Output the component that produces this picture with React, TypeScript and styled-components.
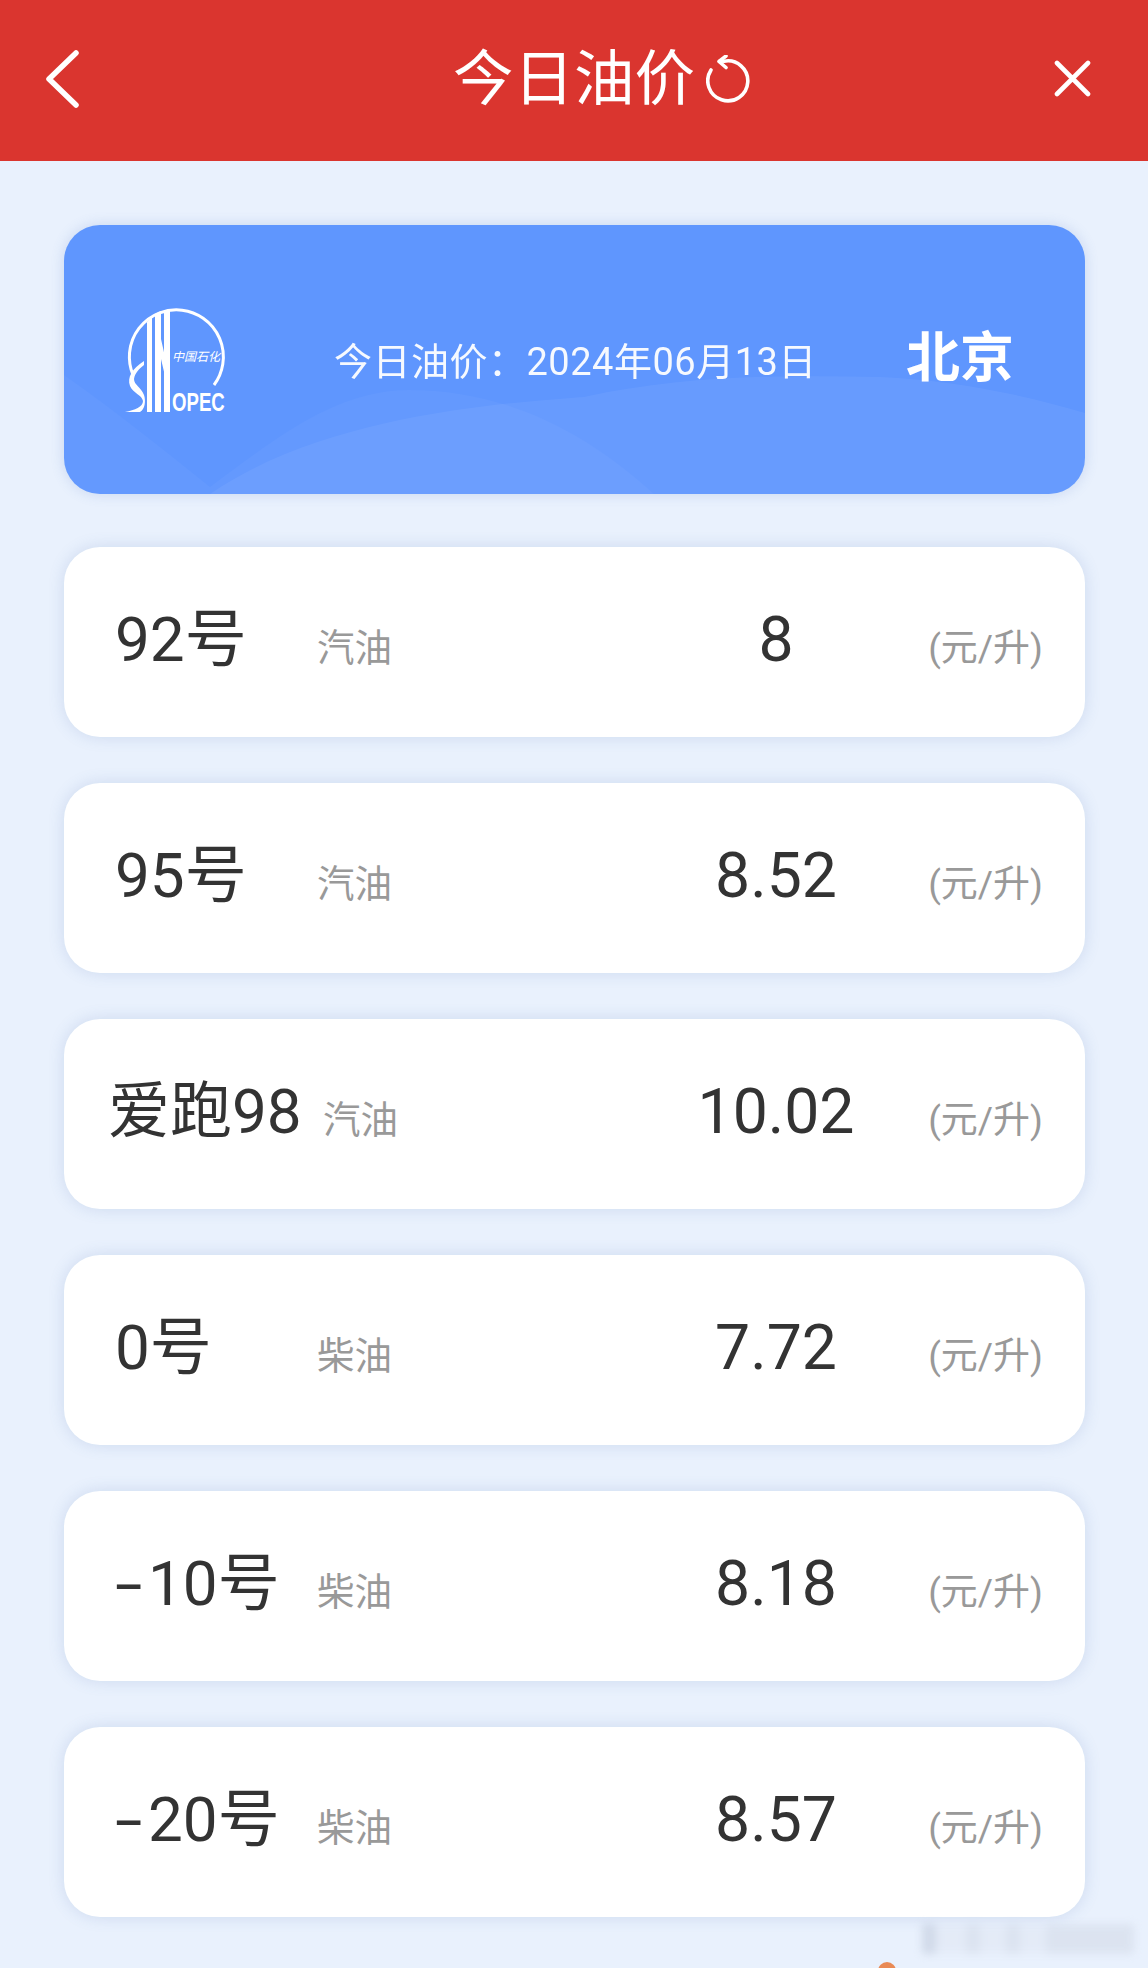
import React from "react";
import styled, { createGlobalStyle } from "styled-components";

const prices = [
  { name: "92号", type: "汽油", price: "8" },
  { name: "95号", type: "汽油", price: "8.52" },
  { name: "爱跑98", type: "汽油", price: "10.02", wide: true },
  { name: "0号", type: "柴油", price: "7.72" },
  { name: "10号", negative: true, type: "柴油", price: "8.18" },
  { name: "20号", negative: true, type: "柴油", price: "8.57" },
];

const App = () => {
  return (
    <Page>
      <GlobalStyle />
      <Header>
        <HeaderSide>
          <svg width="36" height="58" viewBox="0 0 36 58" fill="none">
            <path d="M32 3 L5 29 L32 55" stroke="#fff" strokeWidth="5.5" strokeLinecap="round" strokeLinejoin="round" />
          </svg>
        </HeaderSide>
        <Title>今日油价</Title>
        <HeaderRight>
          <svg width="44" height="48" viewBox="0 0 44 48" fill="none">
            <path d="M5 15 A20 20 0 1 0 18 6.2 L14 6" stroke="#fff" strokeWidth="3.6" strokeLinecap="round" />
            <path d="M20 1 L13 6.5 L20 12.5" stroke="#fff" strokeWidth="3.6" strokeLinecap="round" strokeLinejoin="round" />
          </svg>
          <svg width="37" height="37" viewBox="0 0 37 37" fill="none">
            <path d="M3 3 L34 34 M34 3 L3 34" stroke="#fff" strokeWidth="4.6" strokeLinecap="round" />
          </svg>
        </HeaderRight>
      </Header>

      <Content>
        <Banner>
          <Waves viewBox="0 0 1021 269" preserveAspectRatio="none">
            <path d="M0 150 C50 185 100 225 146 262 C210 215 270 165 345 165 C440 165 520 205 590 269 L0 269 Z" fill="#fff" fillOpacity="0.03" />
            <path d="M146 269 C260 190 440 178 520 172 C620 150 720 150 816 152 C890 155 960 170 1021 188 L1021 269 Z" fill="#fff" fillOpacity="0.055" />
          </Waves>
          <Logo viewBox="0 0 100 104" fill="none">
            <path d="M89 76 A47 47 0 1 0 8 66" stroke="#fff" strokeWidth="3" />
            <path d="M22 13 L27 8 V103 H22 Z M30 5 L36 2 V103 H30 Z M39 1 H45 V103 H39 Z M36 30 L45 70 V88 L36 50 Z" fill="#fff" />
            <path d="M19 52 C7 60 2 68 5 77 C8 84 17 86 18 92 C18 98 10 101 0 103 H15 C20 100 21 92 19 86 C16 78 9 76 9 70 C10 64 14 60 19 56 Z" fill="#fff" />
            <LogoCn x="47" y="52">中国石化</LogoCn>
            <LogoLatin transform="translate(47 102) scale(0.98 1.4)">OPEC</LogoLatin>
          </Logo>
          <DateText>今日油价：2024年06月13日</DateText>
          <City>北京</City>
        </Banner>

        {prices.map((item) => (
          <PriceCard key={item.name}>
            <FuelName $wide={item.wide}>
              {item.negative && <Minus>-</Minus>}
              {item.name}
            </FuelName>
            <FuelType $wide={item.wide}>{item.type}</FuelType>
            <Price>{item.price}</Price>
            <Unit>(元/升)</Unit>
          </PriceCard>
        ))}
      </Content>

      <Watermark />
      <OrangeDot />
    </Page>
  );
};

const GlobalStyle = createGlobalStyle`
  html, body {
    margin: 0;
    padding: 0;
    background: #e9f1fd;
  }
`;

const Page = styled.div`
  position: relative;
  width: 1148px;
  height: 1968px;
  overflow: hidden;
  background: #e9f1fd;
  font-family: Roboto, "Noto Sans CJK SC", sans-serif;
`;

const Header = styled.header`
  display: grid;
  grid-template-columns: 1fr auto 1fr;
  align-items: center;
  height: 161px;
  box-sizing: border-box;
  padding: 0 44px 4px;
  background: #da352f;
  color: #fff;
`;

const HeaderSide = styled.div`
  display: flex;
  align-items: center;
`;

const HeaderRight = styled.div`
  display: flex;
  align-items: center;
  justify-content: space-between;
  padding: 0 13px 0 11px;
`;

const Title = styled.h1`
  margin: 0;
  padding-top: 4px;
  font-size: 60.5px;
  font-weight: 400;
  line-height: 1;
`;

const Content = styled.main`
  display: flex;
  flex-direction: column;
  gap: 46px;
  padding: 64px 63px 0 64px;
`;

const Banner = styled.section`
  position: relative;
  display: flex;
  align-items: center;
  height: 269px;
  margin-bottom: 7px;
  padding: 0 71px 0 61px;
  box-sizing: border-box;
  border-radius: 36px;
  overflow: hidden;
  background: #5f96fe;
  color: #fff;
  box-shadow: 0 0 14px rgba(70, 110, 190, 0.2);
`;

const Waves = styled.svg`
  position: absolute;
  inset: 0;
  width: 100%;
  height: 100%;
`;

const Logo = styled.svg`
  position: relative;
  width: 100px;
  height: 104px;
  margin-top: 3px;
  flex: none;
  overflow: visible;
`;

const LogoCn = styled.text`
  fill: #fff;
  font-size: 12px;
  font-style: italic;
`;

const LogoLatin = styled.text`
  fill: #fff;
  font-family: "Liberation Sans", sans-serif;
  font-size: 19px;
  font-weight: 700;
`;

const DateText = styled.div`
  position: relative;
  margin-left: 109px;
  margin-top: 4px;
  font-size: 38px;
  line-height: 1;
  letter-spacing: 0.5px;
  white-space: nowrap;
  opacity: 0.95;
`;

const City = styled.div`
  position: relative;
  margin-left: auto;
  margin-top: -2px;
  font-size: 54px;
  font-weight: 700;
  line-height: 1;
`;

const PriceCard = styled.article`
  display: grid;
  grid-template-columns: 202px 1fr 200px 166px;
  align-items: baseline;
  align-content: center;
  height: 190px;
  box-sizing: border-box;
  padding: 0 42px 4px 51px;
  border-radius: 36px;
  background: #fff;
  box-shadow: 0 0 16px rgba(80, 110, 170, 0.18);
`;

const FuelName = styled.div<{ $wide?: boolean }>`
  font-size: 62px;
  color: #333;
  line-height: 1.2;
  white-space: nowrap;
  margin-left: ${(p) => (p.$wide ? "-7px" : "0")};
`;

const Minus = styled.span`
  display: inline-block;
  width: 33px;
  transform: scaleX(1.6);
  transform-origin: left center;
`;

const FuelType = styled.div<{ $wide?: boolean }>`
  font-size: 37.5px;
  color: #999;
  white-space: nowrap;
  margin-left: ${(p) => (p.$wide ? "6px" : "0")};
`;

const Price = styled.div`
  font-size: 62.5px;
  color: #333;
  text-align: center;
  line-height: 1.2;
  transform: translateX(-1px);
`;

const Unit = styled.div`
  font-size: 37px;
  color: #999;
  text-align: right;
  white-space: nowrap;
`;

const Watermark = styled.div`
  position: absolute;
  left: 922px;
  top: 1924px;
  width: 212px;
  height: 30px;
  opacity: 0.4;
  filter: blur(4px);
  background: linear-gradient(90deg, #aeb8cc 0 14px, #dde3f0 14px 44px, #c9d0de 44px 58px, #dde3f0 58px 84px, #c9d0de 84px 98px, #dde3f0 98px 124px, #c9d0de 124px 212px);
`;

const OrangeDot = styled.div`
  position: absolute;
  left: 878px;
  top: 1962px;
  width: 18px;
  height: 18px;
  border-radius: 50%;
  background: #e98a55;
`;

export default App;
